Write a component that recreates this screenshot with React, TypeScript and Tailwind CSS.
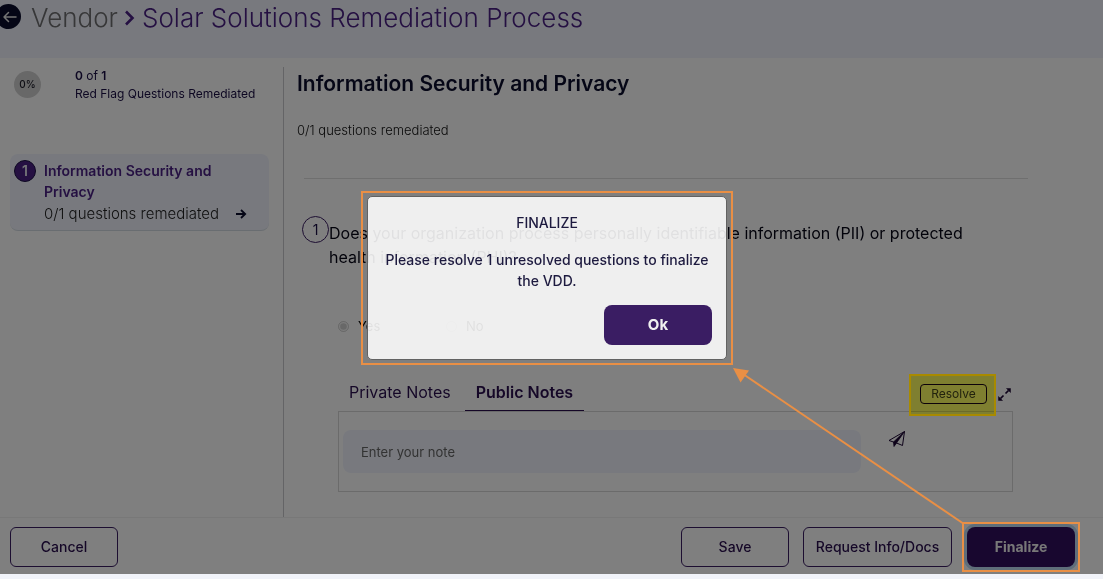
import React, { useState } from 'react';
import { clsx } from 'clsx';

type NoteTab = 'private' | 'public';

const outlineButton =
  'h-10 rounded-md border border-[#3a1d63] text-sm font-medium text-[#2a0f4f]';

function Header() {
  return (
    <header className="flex h-[58px] items-start bg-[#f0f3fd] pt-1">
      <button
        type="button"
        aria-label="Back"
        className="-ml-1 flex size-[25px] shrink-0 items-center justify-center rounded-full bg-[#0b0d2c]"
      >
        <svg className="ml-0.5 size-4" viewBox="0 0 16 16" fill="none" stroke="#e8e8e8" strokeWidth={1.5} strokeLinecap="round" strokeLinejoin="round">
          <path d="M14 8H2M6.500 3.500L2 8l4.500 4.500" />
        </svg>
      </button>
      <nav className="flex items-center pl-[10px] text-[26px] leading-7 font-light">
        <a href="#vendor" className="text-[#6e6e70]">Vendor</a>
        <svg className="mx-1.5 h-4 w-3" viewBox="0 0 12 16" fill="none" stroke="#4b2185" strokeWidth={2.6}>
          <path d="M2 1.500L8.500 8 2 14.500" />
        </svg>
        <h1 className="text-[#4b2185]">Solar Solutions Remediation Process</h1>
      </nav>
    </header>
  );
}

function Sidebar() {
  return (
    <aside className="w-[284px] shrink-0 border-r border-[#c8c8cc]">
      <div className="flex pl-[14px]">
        <div className="mt-1 flex size-[27px] items-center justify-center rounded-full bg-[#d0d0d0] text-[10px] font-medium text-[#1c1c28]">
          0%
        </div>
        <p className="pl-[34px] text-xs leading-[18px] text-[#1b0f45]">
          <b className="font-semibold">0</b> of <b className="font-semibold">1</b>
          <br />
          Red Flag Questions Remediated
        </p>
      </div>

      <a
        href="#section-1"
        className="mt-[51px] mr-[14px] ml-[10px] flex rounded-lg border-b border-[#d3dbe2] bg-[#f0f3fd] pt-[6px] pb-[5px] pl-1"
      >
        <span className="flex size-[22px] shrink-0 items-center justify-center rounded-full border border-[#1b0f45] bg-[#4b2185] text-sm font-semibold text-[#e8e8f0]">
          1
        </span>
        <span className="block flex-1 pl-2 text-sm leading-[21px]">
          <span className="block pr-9 font-semibold text-[#4b2185]">Information Security and Privacy</span>
          <span className="flex items-center gap-4 text-[15px] leading-[23px] font-light text-[#222]">
            0/1 questions remediated
            <svg className="size-3" viewBox="0 0 12 12" fill="none" stroke="#0b0d2c" strokeWidth={1.8}>
              <path d="M1 6h9M6 2l4.200 4L6 10" />
            </svg>
          </span>
        </span>
      </a>
    </aside>
  );
}

function Notes() {
  const [tab, setTab] = useState<NoteTab>('public');

  const tabClass = (name: NoteTab) =>
    clsx(
      'h-[37px] border-b px-[11px] text-base text-[#2a0f4f]',
      tab === name ? 'border-[#2a0f4f] font-semibold' : 'border-transparent font-normal',
    );

  return (
    <div className="mr-[90px] ml-[41px]">
      <div className="flex gap-[3px]">
        <button type="button" className={tabClass('private')} onClick={() => setTab('private')}>
          Private Notes
        </button>
        <button type="button" className={tabClass('public')} onClick={() => setTab('public')}>
          Public Notes
        </button>
        <div className="ml-auto flex items-start gap-[11px] pt-[10px]">
          <div className="relative">
            <button
              type="button"
              className="flex h-5 w-[67px] justify-center rounded border border-[#1b0533] text-xs leading-[17px] text-[#444]"
            >
              Resolve
            </button>
            {/* marker highlight */}
            <div className="pointer-events-none absolute -top-[10px] -right-[9px] z-20 h-[42px] w-[87px] bg-[#ffff60] mix-blend-multiply" />
            <div className="pointer-events-none absolute -top-[10px] -right-[9px] z-20 h-[42px] w-[87px] border-2 border-[#a88a00]" />
          </div>
          <button type="button" aria-label="Expand" className="mt-1 mr-[2px]">
            <svg className="size-[13px]" viewBox="0 0 13 13" fill="#1b0533" stroke="#1b0533">
              <path d="M12.500.5v4L8.500.5zM.5 12.500v-4l4 4z" strokeWidth={0.500} />
              <path d="M10.500 2.500l-3 3M5.500 7.500l-3 3" strokeWidth={1.700} />
            </svg>
          </button>
        </div>
      </div>

      <form className="flex h-[81px] items-start border border-[#d6d6d6] pt-[18px] pl-1" onSubmit={(e) => e.preventDefault()}>
        <input
          type="text"
          aria-label="Note"
          placeholder="Enter your note"
          className="h-[43px] min-w-0 flex-1 rounded-lg bg-[#f0f3fd] px-[18px] text-[13px] placeholder:text-[#666]"
        />
        <button type="submit" aria-label="Send note" className="mr-[106px] ml-[27px]">
          <svg className="size-[18px]" viewBox="0 0 18 18" fill="none" stroke="#1b0533" strokeLinejoin="round">
            <path d="M1 10.500L16.500 1.500 14.500 15.500 9 13.200z" />
            <path d="M5.500 12L16.500 1.500 8.500 13l-2.500 3.500z" fill="#1b0533" strokeWidth={0.800} />
          </svg>
        </button>
      </form>
    </div>
  );
}

function Question() {
  return (
    <section className="mt-[37px] ml-[5px]">
      <div className="flex">
        <span className="flex size-[27px] shrink-0 items-center justify-center rounded-full border border-[#3a1d63] text-sm text-[#1b0f45]">
          1
        </span>
        <p className="max-w-[670px] pt-[5px] text-base leading-6 font-normal text-[#050515]">
          Does your organization process personally identifiable information (PII) or protected health
          information (PHI)?
        </p>
      </div>
      <div className="mt-12 flex text-[13px] leading-[18px] text-black">
        <label className="ml-9 flex w-[108px] items-center gap-[9px]">
          <input type="radio" name="pii" defaultChecked disabled className="size-[11px]" />
          Yes
        </label>
        <label className="flex items-center gap-[9px]">
          <input type="radio" name="pii" disabled className="size-[11px]" />
          No
        </label>
      </div>
    </section>
  );
}

function FinalizeDialog({ onClose }: { onClose: () => void }) {
  return (
    <div className="absolute inset-0 z-30 flex items-center justify-center pr-[9px] pb-[18px]">
      <div className="border-2 border-[#e98f45] px-[4px] py-[3px]">
        <div
          role="dialog"
          aria-labelledby="finalize-title"
          className="w-[360px] rounded-[5px] border border-[#626262] bg-white/88 px-[14px] pt-4 pb-[14px] text-[#1d1a3f]"
        >
          <h2 id="finalize-title" className="text-center text-sm leading-5 font-medium">FINALIZE</h2>
          <p className="-mx-1 mt-4 text-center text-sm leading-[21px] font-medium">
            Please resolve 1 unresolved questions to finalize the VDD.
          </p>
          <button
            type="button"
            onClick={onClose}
            className="mt-[14px] ml-auto block h-10 w-[108px] rounded-lg bg-[#3a1d63] text-[15px] font-bold text-[#f0f0f0]"
          >
            Ok
          </button>
        </div>
      </div>
    </div>
  );
}

export default function App() {
  const [isOpen, setIsOpen] = useState(true);

  return (
    <div className="flex min-h-screen flex-col bg-[#f1f3f9] pb-[5px] font-['Inter',sans-serif]">
      <div className="relative flex flex-1 flex-col overflow-hidden bg-white">
        <Header />

        <div className="flex flex-1 pt-[9px]">
          <Sidebar />
          <main className="min-w-0 flex-1 pl-[13px]">
            <h2 className="text-[21px] leading-[34px] font-semibold text-[#0b0d2c]">Information Security and Privacy</h2>
            <p className="mt-5 text-[13px] leading-[18px] font-light text-[#111]">0/1 questions remediated</p>
            <hr className="mt-[39px] mr-[75px] ml-[7px] border-[#dedede]" />
            <Question />
            <div className="mt-[39px]">
              <Notes />
            </div>
          </main>
        </div>

        <footer className="flex border-t border-[#f0f0f0] pt-[9px] pr-7 pb-[7px] pl-[10px]">
          <button type="button" className={`${outlineButton} w-[108px]`}>Cancel</button>
          <button type="button" className={`${outlineButton} ml-auto w-[108px]`}>Save</button>
          <button type="button" className={`${outlineButton} ml-[14px] w-[149px]`}>Request Info/Docs</button>
          <div className="relative ml-[15px]">
            <button
              type="button"
              onClick={() => setIsOpen(true)}
              className="h-10 w-[108px] rounded-lg bg-[#310f5f] text-sm font-bold text-[#f0f0f0] ring-3 ring-[#bfdcf5]"
            >
              Finalize
            </button>
            {isOpen && (
              <div className="pointer-events-none absolute -inset-[5px] z-40 border-2 border-[#e98f45]">
                {/* callout arrow up to the dialog */}
                <svg className="absolute right-full bottom-full h-[156px] w-[231px] overflow-visible" viewBox="0 0 231 156">
                  <path d="M231 156L10 6" stroke="#e98f45" strokeWidth={2} />
                  <path d="M0 0l16 2.500L7.500 14.500z" fill="#e98f45" />
                </svg>
              </div>
            )}
          </div>
        </footer>

        {isOpen && <div className="absolute inset-0 z-10 bg-black/50" />}
        {isOpen && <FinalizeDialog onClose={() => setIsOpen(false)} />}
      </div>
    </div>
  );
}
